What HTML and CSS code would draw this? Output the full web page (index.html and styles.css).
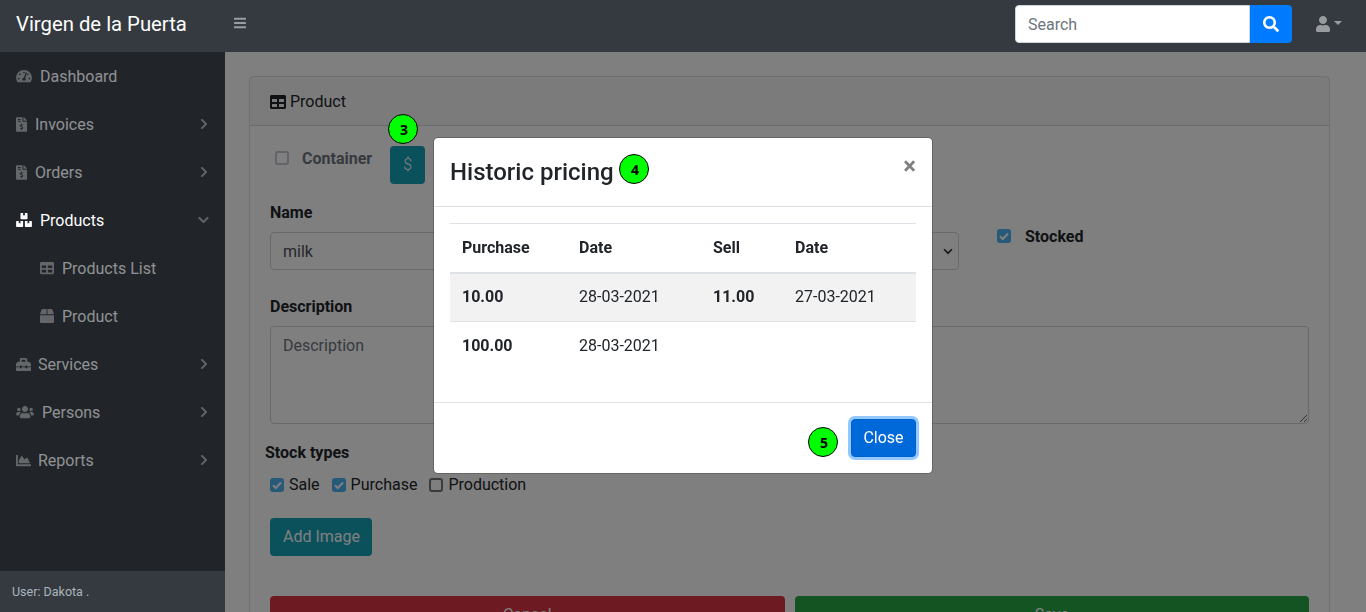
FILE: index.html
```html
<!DOCTYPE html>
<html>
<head>
    <title>Product</title>
    <link rel="stylesheet" href="styles.css">
</head>
<body>
    <nav class="topnav">
        <a class="brand" href="#">Virgen de la Puerta</a>
        <svg class="bars" viewBox="0 0 448 512"><path d="M16 132h416c8.837 0 16-7.163 16-16V76c0-8.837-7.163-16-16-16H16C7.163 60 0 67.163 0 76v40c0 8.837 7.163 16 16 16zm0 160h416c8.837 0 16-7.163 16-16v-40c0-8.837-7.163-16-16-16H16c-8.837 0-16 7.163-16 16v40c0 8.837 7.163 16 16 16zm0 160h416c8.837 0 16-7.163 16-16v-40c0-8.837-7.163-16-16-16H16c-8.837 0-16 7.163-16 16v40c0 8.837 7.163 16 16 16z"/></svg>
        <form class="search" action="#">
            <input type="text" placeholder="Search">
            <button type="button">
                <svg viewBox="0 0 512 512"><path d="M505 442.7L405.3 343c-4.5-4.5-10.6-7-17-7H372c27.6-35.3 44-79.7 44-128C416 93.1 322.9 0 208 0S0 93.1 0 208s93.1 208 208 208c48.3 0 92.7-16.4 128-44v16.3c0 6.4 2.5 12.5 7 17l99.7 99.7c9.4 9.4 24.6 9.4 33.9 0l28.3-28.3c9.4-9.4 9.4-24.6.1-34zM208 336c-70.7 0-128-57.2-128-128 0-70.7 57.2-128 128-128 70.7 0 128 57.2 128 128 0 70.7-57.2 128-128 128z"/></svg>
            </button>
        </form>
        <a class="user-menu" href="#">
            <svg viewBox="0 0 448 512"><path d="M224 256c70.7 0 128-57.3 128-128S294.7 0 224 0 96 57.3 96 128s57.3 128 128 128zm89.6 32h-16.7c-22.2 10.2-46.9 16-72.9 16s-50.6-5.8-72.9-16h-16.7C60.2 288 0 348.2 0 422.4V464c0 26.5 21.5 48 48 48h352c26.5 0 48-21.5 48-48v-41.6c0-74.2-60.2-134.4-134.4-134.4z"/></svg>
            <span class="caret"></span>
        </a>
    </nav>

    <div class="layout">
        <aside class="sidenav">
            <div class="menu">
                <a class="nav-link" href="#">
                    <svg class="ico ico-dash" viewBox="0 0 576 512"><path d="M288 32C128.94 32 0 160.94 0 320c0 52.8 14.25 102.26 39.06 144.8 5.61 9.62 16.3 15.2 27.44 15.2h443c11.14 0 21.83-5.58 27.44-15.2C561.75 422.26 576 372.8 576 320c0-159.06-128.94-288-288-288zm0 64c14.71 0 26.58 10.13 30.32 23.65-1.11 2.26-2.64 4.23-3.45 6.67l-9.22 27.67c-5.13 3.49-10.97 6.01-17.64 6.01-17.67 0-32-14.33-32-32S270.33 96 288 96zM96 384c-17.67 0-32-14.33-32-32s14.33-32 32-32 32 14.33 32 32-14.33 32-32 32zm48-160c-17.67 0-32-14.33-32-32s14.33-32 32-32 32 14.33 32 32-14.33 32-32 32zm246.77-72.41l-61.33 184C343.13 347.33 352 364.54 352 384c0 11.72-3.38 22.55-8.88 32H232.88c-5.5-9.45-8.88-20.28-8.88-32 0-33.94 26.5-61.43 59.9-63.59l61.34-184.01c4.17-12.56 17.73-19.45 30.36-15.17 12.57 4.19 19.35 17.79 15.17 30.36zm14.66 57.2l15.52-46.55c3.47-1.29 7.13-2.23 11.05-2.23 17.67 0 32 14.33 32 32s-14.33 32-32 32c-11.38-.01-20.89-6.28-26.57-15.22zM480 384c-17.67 0-32-14.33-32-32s14.33-32 32-32 32 14.33 32 32-14.33 32-32 32z"/></svg>
                    Dashboard
                </a>
                <a class="nav-link" href="#">
                    <svg class="ico ico-file" viewBox="0 0 384 512"><use href="#file-invoice"/></svg>
                    Invoices
                    <svg class="arrow" viewBox="0 0 320 512"><use href="#chevron-right"/></svg>
                </a>
                <a class="nav-link" href="#">
                    <svg class="ico ico-file" viewBox="0 0 384 512"><use href="#file-invoice"/></svg>
                    Orders
                    <svg class="arrow" viewBox="0 0 320 512"><use href="#chevron-right"/></svg>
                </a>
                <a class="nav-link active" href="#">
                    <svg class="ico ico-dash" viewBox="0 0 576 512"><path d="M560 288h-80v96l-32-21.3-32 21.3v-96h-80c-8.8 0-16 7.2-16 16v192c0 8.8 7.2 16 16 16h224c8.8 0 16-7.2 16-16V304c0-8.8-7.2-16-16-16zm-384-64h224c8.8 0 16-7.2 16-16V16c0-8.8-7.2-16-16-16h-80v96l-32-21.3L256 96V0h-80c-8.8 0-16 7.2-16 16v192c0 8.8 7.2 16 16 16zm64 64h-80v96l-32-21.3L96 384v-96H16c-8.8 0-16 7.2-16 16v192c0 8.8 7.2 16 16 16h224c8.8 0 16-7.2 16-16V304c0-8.8-7.2-16-16-16z"/></svg>
                    Products
                    <svg class="arrow arrow-down" viewBox="0 0 448 512"><path d="M207.029 381.476L12.686 187.132c-9.373-9.373-9.373-24.569 0-33.941l22.667-22.667c9.357-9.357 24.522-9.375 33.901-.04L224 284.505l154.745-154.021c9.379-9.335 24.544-9.317 33.901.04l22.667 22.667c9.373 9.373 9.373 24.569 0 33.941L240.971 381.476c-9.373 9.372-24.569 9.372-33.942 0z"/></svg>
                </a>
                <a class="nav-link sub" href="#">
                    <svg class="ico ico-sub" viewBox="0 0 512 512"><use href="#table"/></svg>
                    Products List
                </a>
                <a class="nav-link sub" href="#">
                    <svg class="ico ico-sub" viewBox="0 0 512 512"><path d="M509.5 184.6L458.9 32.8C452.4 13.2 434.1 0 413.4 0H272v192h238.7c-.4-2.5-.4-5-1.2-7.4zM240 0H98.6c-20.7 0-39 13.2-45.5 32.8L2.5 184.6c-.8 2.4-.8 4.9-1.2 7.4H240V0zM0 224v240c0 26.5 21.5 48 48 48h416c26.5 0 48-21.5 48-48V224H0z"/></svg>
                    Product
                </a>
                <a class="nav-link" href="#">
                    <svg class="ico ico-tool" viewBox="0 0 512 512"><path d="M502.63 214.63l-45.25-45.25c-6-6-14.14-9.37-22.63-9.37H384V80c0-26.51-21.49-48-48-48H176c-26.51 0-48 21.49-48 48v80H77.25c-8.49 0-16.62 3.37-22.63 9.37L9.37 214.63c-6 6-9.37 14.14-9.37 22.63V320h128v-16c0-8.84 7.16-16 16-16h32c8.84 0 16 7.16 16 16v16h128v-16c0-8.84 7.16-16 16-16h32c8.84 0 16 7.16 16 16v16h128v-82.75c0-8.48-3.37-16.62-9.37-22.62zM320 160H192V96h128v64zm64 208c0 8.84-7.16 16-16 16h-32c-8.84 0-16-7.16-16-16v-16H192v16c0 8.84-7.16 16-16 16h-32c-8.84 0-16-7.16-16-16v-16H0v96c0 17.67 14.33 32 32 32h448c17.67 0 32-14.33 32-32v-96H384v16z"/></svg>
                    Services
                    <svg class="arrow" viewBox="0 0 320 512"><use href="#chevron-right"/></svg>
                </a>
                <a class="nav-link" href="#">
                    <svg class="ico ico-users" viewBox="0 0 640 512"><path d="M96 224c35.3 0 64-28.7 64-64s-28.7-64-64-64-64 28.7-64 64 28.7 64 64 64zm448 0c35.3 0 64-28.7 64-64s-28.7-64-64-64-64 28.7-64 64 28.7 64 64 64zm32 32h-64c-17.6 0-33.5 7.1-45.1 18.6 40.3 22.1 68.9 62 75.1 109.4h66c17.7 0 32-14.3 32-32v-32c0-35.3-28.7-64-64-64zm-256 0c61.9 0 112-50.1 112-112S381.9 32 320 32 208 82.1 208 144s50.1 112 112 112zm76.8 32h-8.3c-20.8 10-43.9 16-68.5 16s-47.6-6-68.5-16h-8.3C179.6 288 128 339.6 128 403.2V432c0 26.5 21.5 48 48 48h288c26.5 0 48-21.5 48-48v-28.8c0-63.6-51.6-115.2-115.2-115.2zm-223.7-13.4C161.5 263.1 145.6 256 128 256H64c-35.3 0-64 28.7-64 64v32c0 17.7 14.3 32 32 32h65.9c6.3-47.4 34.9-87.3 75.2-109.4z"/></svg>
                    Persons
                    <svg class="arrow" viewBox="0 0 320 512"><use href="#chevron-right"/></svg>
                </a>
                <a class="nav-link" href="#">
                    <svg class="ico ico-tool" viewBox="0 0 512 512"><path d="M500 384c6.6 0 12 5.4 12 12v40c0 6.6-5.4 12-12 12H12c-6.6 0-12-5.4-12-12V76c0-6.6 5.4-12 12-12h40c6.6 0 12 5.4 12 12v308h436zM372.7 159.5L288 216l-85.3-113.7c-5.1-6.8-15.5-6.3-19.9 1L96 248v104h384l-89.9-187.8c-3.2-6.5-11.4-8.7-17.4-4.7z"/></svg>
                    Reports
                    <svg class="arrow" viewBox="0 0 320 512"><use href="#chevron-right"/></svg>
                </a>
            </div>
            <div class="side-footer">User: Dakota .</div>
        </aside>

        <main class="content">
            <div class="card">
                <div class="card-header">
                    <svg class="head-ico" viewBox="0 0 512 512"><use href="#table"/></svg>
                    Product
                </div>
                <form class="card-body" action="#">
                    <div class="container-row">
                        <input class="check" type="checkbox" id="container" disabled>
                        <label class="bold" for="container">Container</label>
                        <button class="btn btn-info btn-price" type="button">$</button>
                    </div>

                    <div class="name-row">
                        <div class="name-col">
                            <label class="bold field-label">Name</label>
                            <input class="field" type="text" value="milk">
                        </div>
                        <div class="select-col">
                            <div class="field select-box">
                                <svg viewBox="0 0 16 16"><path d="M3.5 6l4.5 4.5L12.5 6" fill="none" stroke-width="2"/></svg>
                            </div>
                        </div>
                        <div class="stocked">
                            <input class="check" type="checkbox" id="stocked" checked>
                            <label class="bold" for="stocked">Stocked</label>
                        </div>
                    </div>

                    <label class="bold field-label">Description</label>
                    <textarea class="field area" placeholder="Description"></textarea>

                    <div class="bold types-title">Stock types</div>
                    <div class="types">
                        <input class="check" type="checkbox" id="sale" checked><label for="sale">Sale</label>
                        <input class="check" type="checkbox" id="purchase" checked><label for="purchase">Purchase</label>
                        <input class="check" type="checkbox" id="production"><label for="production">Production</label>
                    </div>

                    <button class="btn btn-info btn-image" type="button">Add Image</button>

                    <div class="actions">
                        <button class="btn btn-danger" type="button">Cancel</button>
                        <button class="btn btn-success" type="button">Save</button>
                    </div>
                </form>
            </div>
            <div class="backdrop"></div>
            <span class="step step-3">3</span>
        </main>
    </div>

    <div class="modal">
        <div class="modal-header">
            <h2>Historic pricing</h2>
            <span class="step step-4">4</span>
            <button class="close" type="button">&times;</button>
        </div>
        <div class="modal-body">
            <table>
                <thead>
                    <tr><th>Purchase</th><th>Date</th><th>Sell</th><th>Date</th></tr>
                </thead>
                <tbody>
                    <tr><td class="bold">10.00</td><td>28-03-2021</td><td class="bold">11.00</td><td>27-03-2021</td></tr>
                    <tr><td class="bold">100.00</td><td>28-03-2021</td><td></td><td></td></tr>
                </tbody>
            </table>
        </div>
        <div class="modal-footer">
            <span class="step step-5">5</span>
            <button class="btn btn-close" type="button">Close</button>
        </div>
    </div>

    <svg class="defs" width="0" height="0">
        <defs>
            <path id="chevron-right" d="M285.476 272.971L91.132 467.314c-9.373 9.373-24.569 9.373-33.941 0l-22.667-22.667c-9.357-9.357-9.375-24.522-.04-33.901L188.505 256 34.484 101.255c-9.335-9.379-9.317-24.544.04-33.901l22.667-22.667c9.373-9.373 24.569-9.373 33.941 0L285.475 239.03c9.373 9.372 9.373 24.568.001 33.941z"/>
            <path id="table" d="M464 32H48C21.49 32 0 53.49 0 80v352c0 26.51 21.49 48 48 48h416c26.51 0 48-21.49 48-48V80c0-26.51-21.49-48-48-48zM224 416H64v-96h160v96zm0-160H64v-96h160v96zm224 160H288v-96h160v96zm0-160H288v-96h160v96z"/>
            <path id="file-invoice" d="M377 105L279.1 7c-4.5-4.5-10.6-7-17-7H256v128h128v-6.1c0-6.3-2.5-12.4-7-16.9zm-153 31V0H24C10.7 0 0 10.7 0 24v464c0 13.3 10.7 24 24 24h336c13.3 0 24-10.7 24-24V160H248c-13.2 0-24-10.8-24-24zM64 72c0-4.42 3.58-8 8-8h80c4.42 0 8 3.58 8 8v16c0 4.42-3.58 8-8 8H72c-4.42 0-8-3.58-8-8V72zm0 80v-16c0-4.42 3.58-8 8-8h80c4.42 0 8 3.58 8 8v16c0 4.42-3.58 8-8 8H72c-4.42 0-8-3.58-8-8zm144 263.88V440c0 4.42-3.58 8-8 8h-16c-4.42 0-8-3.58-8-8v-24.29c-11.29-.58-22.27-4.52-31.37-11.35-3.9-2.93-4.1-8.77-.57-12.14l11.75-11.21c2.77-2.64 6.89-2.76 10.13-.73 3.87 2.42 8.26 3.72 12.82 3.72h28.11c6.5 0 11.8-5.92 11.8-13.19 0-5.95-3.61-11.19-8.77-12.73l-45-13.5c-18.59-5.58-31.58-23.42-31.58-43.39 0-24.52 19.05-44.44 42.67-45.07V232c0-4.42 3.58-8 8-8h16c4.42 0 8 3.58 8 8v24.29c11.29.58 22.27 4.51 31.37 11.35 3.9 2.93 4.1 8.77.57 12.14l-11.75 11.21c-2.77 2.64-6.89 2.76-10.13.73-3.87-2.43-8.26-3.72-12.82-3.72h-28.11c-6.5 0-11.8 5.92-11.8 13.19 0 5.95 3.61 11.19 8.77 12.73l45 13.5c18.59 5.58 31.58 23.42 31.58 43.39 0 24.53-19.05 44.44-42.67 45.07z"/>
        </defs>
    </svg>
</body>
</html>
```

FILE: styles.css
```css
* {
    box-sizing: border-box;
}

html, body {
    height: 100%;
    margin: 0;
    overflow: hidden;
}

body {
    font-family: Roboto, "Liberation Sans", sans-serif;
    font-size: 16px;
    line-height: 24px;
    color: #212529;
    background-color: #fff;
}

a {
    text-decoration: none;
}

.bold {
    font-weight: 700;
}

/* top bar */
.topnav {
    height: 52px;
    padding-bottom: 4px;
    display: flex;
    align-items: center;
    background-color: #343a40;
}

.brand {
    width: 225px;
    padding-left: 16px;
    font-size: 20.3px;
    line-height: 30px;
    color: #fff;
}

.bars {
    width: 12px;
    height: 14px;
    margin-left: 9px;
    margin-bottom: 2px;
    fill: rgba(255, 255, 255, 0.5);
}

.search {
    display: flex;
    margin-left: auto;
}

.search input {
    width: 235px;
    height: 38px;
    padding: 6px 12px;
    border: 1px solid #ced4da;
    border-radius: 4px 0 0 4px;
    font: inherit;
    background-color: #fff;
}

.search input::placeholder,
.area::placeholder {
    color: #6c757d;
    opacity: 1;
}

.search button {
    width: 42px;
    height: 38px;
    border: none;
    border-radius: 0 4px 4px 0;
    background-color: #007bff;
    display: flex;
    align-items: center;
    justify-content: center;
    padding: 0;
}

.search button svg {
    width: 16px;
    height: 16px;
    fill: #fff;
}

.user-menu {
    display: flex;
    align-items: center;
    margin-left: 24px;
    margin-right: 24px;
    height: 38px;
}

.user-menu svg {
    width: 14px;
    height: 16px;
    fill: rgba(255, 255, 255, 0.5);
}

.caret {
    width: 0;
    height: 0;
    margin-left: 4px;
    margin-bottom: 2px;
    border-top: 4.8px solid rgba(255, 255, 255, 0.5);
    border-left: 4.8px solid transparent;
    border-right: 4.8px solid transparent;
}

/* page body */
.layout {
    display: flex;
    height: calc(100% - 52px);
}

.sidenav {
    width: 225px;
    flex: none;
    display: flex;
    flex-direction: column;
    background-color: #212529;
}

.menu {
    flex: 1;
    padding-top: 1px;
}

.nav-link {
    height: 48px;
    display: flex;
    align-items: center;
    padding: 0 16px;
    color: rgba(255, 255, 255, 0.5);
}

.nav-link.active {
    color: #fff;
}

.nav-link.sub {
    padding-left: 40px;
}

.ico {
    height: 14px;
    flex: none;
    margin-bottom: 2px;
    fill: rgba(255, 255, 255, 0.3);
}

.nav-link.active .ico {
    fill: #fff;
}

.ico-dash {
    width: 16px;
    margin-right: 8px;
}

.ico-file {
    width: 11px;
    height: 15px;
    margin-right: 8px;
}

.ico-sub {
    width: 14px;
    margin-right: 8px;
}

.ico-tool {
    width: 15px;
    height: 15px;
    margin-right: 7px;
}

.ico-users {
    width: 18px;
    margin-right: 8px;
}

.arrow {
    width: 8px;
    height: 12px;
    margin-left: auto;
    margin-right: 1px;
    margin-bottom: 2px;
    fill: rgba(255, 255, 255, 0.3);
}

.arrow-down {
    width: 11px;
    margin-right: 0;
}

.side-footer {
    height: 41px;
    padding: 0 12px;
    display: flex;
    align-items: center;
    font-size: 12.5px;
    color: #adb5bd;
    background-color: #343a40;
}

/* main content */
.content {
    position: relative;
    flex: 1;
    min-width: 0;
    padding: 24px;
    padding-right: 36px;
    overflow: hidden;
}

.backdrop {
    position: absolute;
    top: 0;
    left: 0;
    right: 0;
    bottom: 0;
    background-color: rgba(0, 0, 0, 0.5);
}

.card {
    border: 1px solid rgba(0, 0, 0, 0.125);
    border-radius: 4px;
}

.card-header {
    height: 49px;
    padding: 13px 20px 11px;
    display: flex;
    align-items: center;
    background-color: rgba(0, 0, 0, 0.03);
    border-bottom: 1px solid rgba(0, 0, 0, 0.125);
}

.head-ico {
    width: 16px;
    height: 16px;
    margin-right: 4px;
    fill: #212529;
}

.card-body {
    padding: 20px;
}

.container-row {
    display: flex;
    align-items: center;
    height: 38px;
    margin-bottom: 16px;
}

.container-row .check {
    margin-left: 5px;
    margin-right: 13px;
    margin-bottom: 14px;
}

.container-row label {
    margin-bottom: 13px;
    color: #6c757d;
}

.check {
    appearance: none;
    width: 14px;
    height: 14px;
    margin: 0;
    flex: none;
    border: 2px solid #767676;
    border-radius: 3px;
    background-color: #fff;
}

.check:disabled {
    border-color: #c8c8d0;
}

.check:checked {
    border: none;
    background-color: #4db5f0;
    background-image: url("data:image/svg+xml,%3Csvg xmlns='http://www.w3.org/2000/svg' viewBox='0 0 14 14'%3E%3Cpath d='M3 7.2l2.8 2.8L11 4.5' fill='none' stroke='white' stroke-width='2'/%3E%3C/svg%3E");
}

.btn {
    height: 38px;
    padding: 6px 12px;
    border: 1px solid transparent;
    border-radius: 4px;
    font: inherit;
    color: #fff;
    white-space: nowrap;
}

.btn-info {
    background-color: #17a2b8;
}

.btn-price {
    width: 35px;
    margin-left: 18px;
    padding: 0;
    font-weight: 300;
}

.name-row {
    display: grid;
    grid-template-columns: 340px 349px 1fr;
    margin-bottom: 24px;
}

.name-col {
    display: flex;
    flex-direction: column;
}

.field-label {
    display: block;
    padding-top: 1px;
    margin-bottom: 7px;
}

.field {
    height: 38px;
    padding: 6px 12px;
    border: 1px solid #ced4da;
    border-radius: 4px;
    font: inherit;
    color: #495057;
    background-color: #fff;
}

.select-col {
    display: flex;
    align-items: flex-end;
}

.select-box {
    width: 100%;
    display: flex;
    align-items: center;
    justify-content: flex-end;
    padding-right: 3px;
}

.select-box svg {
    width: 14px;
    height: 14px;
    stroke: #343a40;
}

.stocked {
    display: flex;
    align-items: center;
    height: 24px;
    margin-top: 25px;
    margin-left: 38px;
}

.stocked .check {
    margin-bottom: 2px;
}

.stocked label {
    margin-left: 14px;
}

.area {
    display: block;
    width: 100%;
    height: 98px;
    padding-top: 7px;
    margin-bottom: 16px;
    resize: vertical;
}

.types-title {
    margin-left: -5px;
    padding-top: 1px;
    margin-bottom: 8px;
}

.types {
    display: flex;
    align-items: center;
    height: 24px;
    margin-bottom: 21px;
}

.types label {
    margin-left: 5px;
    margin-right: 12px;
}

.btn-image {
    width: 102px;
    display: block;
}

.actions {
    display: grid;
    grid-template-columns: 1fr 1fr;
    column-gap: 10px;
    margin-top: 40px;
}

.btn-danger {
    background-color: #dc3545;
}

.btn-success {
    background-color: #28a745;
}

/* modal */
.modal {
    position: fixed;
    top: 137px;
    left: 433px;
    width: 500px;
    background-color: #fff;
    border: 1px solid rgba(0, 0, 0, 0.2);
    background-clip: padding-box;
    border-radius: 5px;
}

.modal-header {
    position: relative;
    height: 69px;
    padding: 16px;
    border-bottom: 1px solid #dee2e6;
}

.modal-header h2 {
    margin: 0;
    font-size: 24px;
    line-height: 36px;
    font-weight: 500;
}

.close {
    position: absolute;
    top: 12px;
    right: 16px;
    padding: 0;
    border: none;
    background: none;
    font: 700 24px/32px Roboto, sans-serif;
    color: #000;
    opacity: 0.5;
}

.modal-body {
    padding: 16px;
}

table {
    width: 100%;
    margin-bottom: 16px;
    border-collapse: collapse;
    table-layout: fixed;
}

th, td {
    padding: 12px;
    text-align: left;
    border-top: 1px solid #dee2e6;
}

th:nth-child(1) {
    width: 117px;
}

th:nth-child(2) {
    width: 134px;
}

th:nth-child(3) {
    width: 82px;
}

thead th {
    border-bottom: 2px solid #dee2e6;
}

tbody tr:first-child td {
    padding-top: 11px;
}

tbody tr:nth-child(odd) {
    background-color: rgba(0, 0, 0, 0.05);
}

.modal-footer {
    position: relative;
    display: flex;
    justify-content: flex-end;
    padding: 16px;
    border-top: 1px solid #dee2e6;
}

.btn-close {
    width: 65px;
    padding: 6px 0;
    background-color: #0069d9;
    border-color: #0062cc;
    box-shadow: 0 0 0 3px rgba(38, 143, 255, 0.5);
}

/* numbered markers */
.step {
    position: absolute;
    width: 30px;
    height: 30px;
    padding: 2px 0 0 2px;
    border: 1px solid #000;
    border-radius: 50%;
    background-color: #00ff00;
    display: flex;
    align-items: center;
    justify-content: center;
    font-family: "Open Sans", sans-serif;
    font-size: 14px;
    font-weight: 700;
    color: #000;
}

.step-3 {
    top: 62px;
    left: 163px;
}

.step-4 {
    top: 16px;
    left: 185px;
}

.step-5 {
    top: 24px;
    left: 374px;
}

.defs {
    position: absolute;
}
```
